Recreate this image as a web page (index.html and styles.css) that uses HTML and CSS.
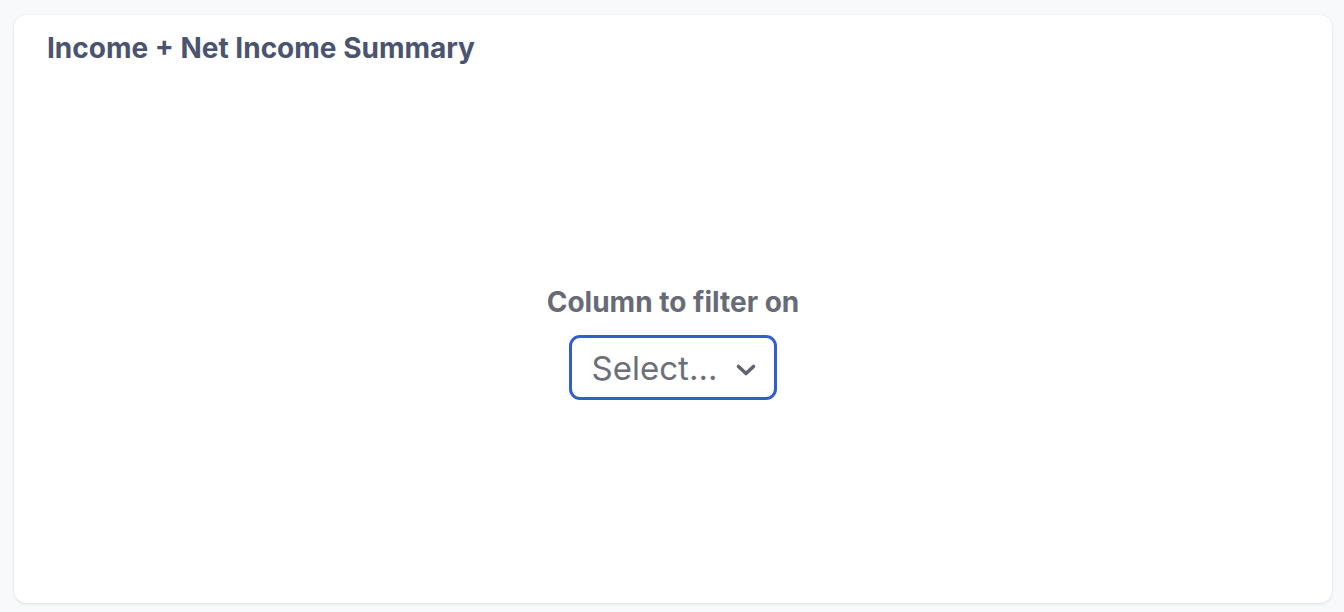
FILE: index.html
```html
<!DOCTYPE html>
<html>
<head>
<meta charset="utf-8">
<link rel="stylesheet" href="styles.css">
</head>
<body>
<div class="card">
  <div class="card-header">
    <h2 class="card-title">Income + Net Income Summary</h2>
  </div>
  <div class="card-body">
    <div class="filter">
      <label class="filter-label">Column to filter on</label>
      <div class="select">
        <span class="select-text">Select...</span>
        <svg class="chevron" width="22" height="16" viewBox="0 0 22 16"><path d="M3.5 4.5l7.5 7 7.5-7" fill="none" stroke="#5f6470" stroke-width="3.6" stroke-linecap="round" stroke-linejoin="round"/></svg>
      </div>
    </div>
  </div>
</div>
</body>
</html>
```
FILE: styles.css
```css
* { box-sizing: border-box; }
html, body { margin: 0; padding: 0; }
body {
  background: #f8f9fb;
  font-family: Inter, "Noto Sans", sans-serif;
  width: 1344px;
  height: 612px;
  padding: 15px 12px 9px 14px;
}
.card {
  background: #fff;
  border-radius: 12px;
  box-shadow: 0 1px 3px rgba(20, 30, 60, 0.12), 0 0 1px rgba(20,30,60,0.08);
  height: 588px;
  display: flex;
  flex-direction: column;
}
.card-header {
  padding: 16px 33px 0;
  height: 68px;
}
.card-title {
  margin: 0;
  font-size: 28px;
  font-weight: 700;
  color: #4a5470;
  line-height: 34px;
}
.card-body {
  flex: 1;
  display: flex;
  align-items: center;
  justify-content: center;
}
.filter {
  display: flex;
  flex-direction: column;
  align-items: center;
  gap: 17px;
}
.filter-label {
  font-size: 28px;
  font-weight: 700;
  color: #676b78;
  line-height: 32px;
}
.select {
  display: flex;
  align-items: center;
  gap: 18px;
  height: 65px;
  padding: 0 17px 0 20px;
  border: 3px solid #2f5fcf;
  border-radius: 11px;
}
.select-text {
  font-size: 33px;
  color: #6b6f7a;
  font-weight: 400;
}
.chevron { display: block; margin-top: 5px; }
```
